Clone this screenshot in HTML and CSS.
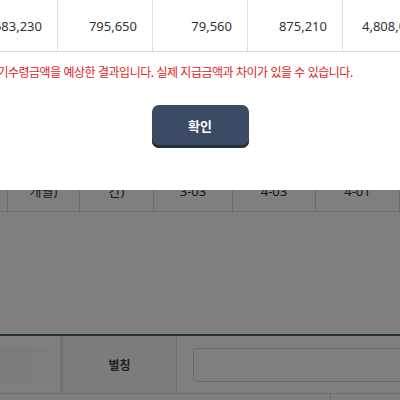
FILE: index.html
```html
<!DOCTYPE html>
<html lang="ko">
<head>
<meta charset="utf-8">
<link rel="stylesheet" href="styles.css">
</head>
<body>
<div class="page">
  <div class="row-a">
    <div class="ca c1">개월)</div>
    <div class="ca c2">간)</div>
    <div class="ca c3">3-03</div>
    <div class="ca c4">4-03</div>
    <div class="ca c5">4-01</div>
  </div>
  <div class="spacer"></div>
  <div class="form">
    <div class="form-row">
      <div class="fcell fleft"><div class="fbox"><div class="fbox-in"></div></div></div>
      <div class="fcell flabel">별칭</div>
      <div class="fcell fvalue"><div class="finput"></div></div>
    </div>
    <div class="form-row2">
      <div class="f2a"></div>
      <div class="f2b"></div>
    </div>
  </div>
</div>
<div class="overlay"></div>
<div class="modal">
  <div class="mtable">
    <div class="mcell">583,230</div>
    <div class="mcell">795,650</div>
    <div class="mcell">79,560</div>
    <div class="mcell">875,210</div>
    <div class="mcell">4,808,000</div>
  </div>
  <p class="note">※ 연금기수령금액을 예상한 결과입니다. 실제 지급금액과 차이가 있을 수 있습니다.</p>
  <div class="actions"><button class="btn">확인</button></div>
</div>
</body>
</html>
```
FILE: styles.css
```css
html, body {
  margin: 0;
  padding: 0;
}
body {
  width: 400px;
  height: 400px;
  overflow: hidden;
  position: relative;
  background: #fff;
  font-family: "Noto Sans", "Noto Sans CJK KR", sans-serif;
  color: #333;
}
.page {
  padding-top: 168px;
}
.row-a {
  display: flex;
  height: 43px;
  border-bottom: 1px solid #dcdcdc;
  padding-left: 7px;
}
.ca {
  border-left: 1px solid #d6d6d6;
  display: flex;
  align-items: center;
  justify-content: center;
  font-size: 13px;
  color: #333;
  padding-top: 2px;
}
.c1 { width: 71px; }
.c2 { width: 73px; }
.c3 { width: 78px; }
.c4 { width: 82px; }
.c5 { width: 83px; border-right: 1px solid #d6d6d6; }
.spacer {
  height: 122px;
}
.form {
  border-top: 2px solid #4f6f4c;
}
.form-row {
  display: flex;
  height: 57px;
  border-bottom: 1px solid #d8d8d8;
}
.fcell {
  display: flex;
  align-items: center;
  flex-shrink: 0;
}
.fleft {
  width: 60px;
  border-right: 3px solid #e4e4e4;
}
.fbox {
  width: 50px;
  height: 36px;
  background: #fbfbfb;
  display: flex;
}
.fbox-in {
  width: 32px;
  background: #f6f6f6;
}
.flabel {
  width: 113px;
  justify-content: center;
  border-right: 1px solid #dcdcdc;
  background: #f9f9f9;
  font-family: "Noto Sans CJK KR", sans-serif;
  font-weight: 700;
  font-size: 12px;
  color: #444;
}
.fvalue {
  flex: 1 1 auto;
  min-width: 0;
  padding-left: 16px;
}
.finput {
  flex-shrink: 0;
  width: 260px;
  height: 32px;
  border: 1px solid #d4d4d4;
  border-radius: 4px;
  background: #fff;
}
.form-row2 {
  display: flex;
  height: 20px;
}
.f2a {
  width: 330px;
  border-right: 1px solid #d8d8d8;
}
.overlay {
  position: absolute;
  inset: 0;
  background: rgba(0, 0, 0, 0.5);
}
.modal {
  position: absolute;
  top: 0;
  left: -200px;
  width: 800px;
  height: 190px;
  background: #fff;
  display: flex;
  flex-direction: column;
}
.mtable {
  display: flex;
  justify-content: center;
  height: 52px;
}
.mcell {
  width: 94px;
  border-left: 1px solid #dedede;
  border-bottom: 1px solid #dedede;
  display: flex;
  align-items: center;
  justify-content: flex-end;
  padding-right: 15px;
  box-sizing: border-box;
  font-size: 13px;
  color: #333;
}
.mcell + .mcell {
  width: 95px;
}
.mcell:last-child {
  border-right: 1px solid #dedede;
}
.note {
  margin: 12px 0 0 162px;
  font-family: "Noto Sans CJK KR", sans-serif;
  font-size: 12px;
  letter-spacing: -0.5px;
  color: #e41b1b;
  line-height: 16px;
  white-space: nowrap;
}
.actions {
  display: flex;
  justify-content: center;
  margin-top: 25px;
}
.btn {
  width: 97px;
  height: 43px;
  border: none;
  border-radius: 7px;
  background: #3b4b64;
  box-shadow: inset 0 -3px 0 #2a2e36;
  color: #fff;
  font-family: "Noto Sans CJK KR", sans-serif;
  font-weight: 700;
  font-size: 13px;
  padding: 0 0 3px;
}
```
